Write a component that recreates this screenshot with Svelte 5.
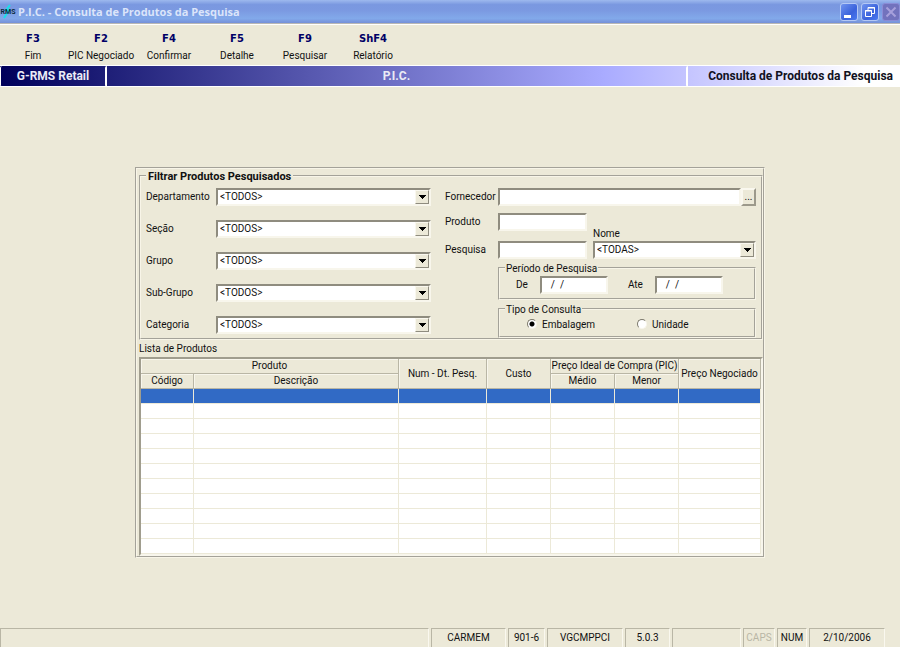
<script lang="ts">
  const shortcuts = [
    { key: 'F3', label: 'Fim' },
    { key: 'F2', label: 'PIC Negociado' },
    { key: 'F4', label: 'Confirmar' },
    { key: 'F5', label: 'Detalhe' },
    { key: 'F9', label: 'Pesquisar' },
    { key: 'ShF4', label: 'Relatório' }
  ];

  const filters = [
    { id: 'departamento', label: 'Departamento' },
    { id: 'secao', label: 'Seção' },
    { id: 'grupo', label: 'Grupo' },
    { id: 'subgrupo', label: 'Sub-Grupo' },
    { id: 'categoria', label: 'Categoria' }
  ];

  const columns = ['codigo', 'descricao', 'pesq', 'custo', 'medio', 'menor', 'negociado'];
  const rows = Array.from({ length: 11 }, (_, i) => i);

  const status = ['', 'CARMEM', '901-6', 'VGCMPPCI', '5.0.3', '', 'CAPS', 'NUM', '2/10/2006'];

  let selected = $state(0);
  let tipo = $state('embalagem');
  let de = $state('  /  /');
  let ate = $state('  /  /');
</script>

{#snippet arrow()}
  <span class="arrow">
    <svg width="7" height="4" viewBox="0 0 7 4" shape-rendering="crispEdges"><path d="M0 0h7v1h-1v1h-1v1h-1v1h-1v-1h-1v-1h-1v-1h-1z" /></svg>
  </span>
{/snippet}

<div class="window">
  <header class="titlebar">
    <svg class="logo" width="16" height="16" viewBox="0 0 16 16">
      <path d="M10 1 6 6h3L4 14" fill="none" stroke="#19e0e8" stroke-width="2" />
      <text x="8" y="10" text-anchor="middle">RMS</text>
    </svg>
    <h1>P.I.C. - Consulta de Produtos da Pesquisa</h1>
    <div class="controls">
      <button aria-label="Minimizar">
        <svg width="16" height="16" viewBox="0 0 16 16"><path d="M3 11h7v3H3z" fill="#fff" /></svg>
      </button>
      <button aria-label="Restaurar">
        <svg width="16" height="16" viewBox="0 0 16 16" fill="none" stroke="#fff">
          <path d="M6 6V3.5h6.500V9.500H10M6 4h7" />
          <path d="M3.500 6.500h6v6h-6zM3 7h7" />
        </svg>
      </button>
      <button class="close" aria-label="Fechar" disabled>
        <svg width="16" height="16" viewBox="0 0 16 16"><path d="m3.500 3.500 9 9M12.500 3.500l-9 9" stroke="#a7a0dc" stroke-width="2" /></svg>
      </button>
    </div>
  </header>

  <nav class="toolbar">
    {#each shortcuts as s}
      <button><b>{s.key}</b><span>{s.label}</span></button>
    {/each}
  </nav>

  <div class="band">
    <span class="brand">G-RMS Retail</span>
    <span class="module">P.I.C.</span>
    <span class="screen">Consulta de Produtos da Pesquisa</span>
  </div>

  <main>
    <section class="panel">
      <fieldset class="filters">
        <legend>Filtrar Produtos Pesquisados</legend>
        <div class="left">
          {#each filters as f}
            <label for={f.id}>{f.label}</label>
            <div class="combo">
              <select id={f.id}><option>&lt;TODOS&gt;</option></select>
              {@render arrow()}
            </div>
          {/each}
        </div>

        <div class="right">
          <div class="fields">
            <label for="fornecedor">Fornecedor</label>
            <div class="lookup">
              <input id="fornecedor" type="text" />
              <button aria-label="Buscar fornecedor">...</button>
            </div>
            <label for="produto">Produto</label>
            <input id="produto" type="text" />
            <div class="nome">
              <label for="nome">Nome</label>
              <div class="combo">
                <select id="nome"><option>&lt;TODAS&gt;</option></select>
                {@render arrow()}
              </div>
            </div>
            <label for="pesquisa">Pesquisa</label>
            <input id="pesquisa" type="text" />
          </div>

          <fieldset class="group periodo">
            <legend>Período de Pesquisa</legend>
            <label for="de">De</label>
            <input id="de" type="text" bind:value={de} />
            <label for="ate">Ate</label>
            <input id="ate" type="text" bind:value={ate} />
          </fieldset>

          <fieldset class="group tipo">
            <legend>Tipo de Consulta</legend>
            <label><input type="radio" name="tipo" value="embalagem" bind:group={tipo} />Embalagem</label>
            <label><input type="radio" name="tipo" value="unidade" bind:group={tipo} />Unidade</label>
          </fieldset>
        </div>
      </fieldset>

      <h2 id="lista">Lista de Produtos</h2>
      <div class="grid">
        <table aria-labelledby="lista">
          <colgroup>
            {#each columns as c}
              <col class={c} />
            {/each}
          </colgroup>
          <thead>
            <tr>
              <th colspan="2">Produto</th>
              <th rowspan="2">Num - Dt. Pesq.</th>
              <th rowspan="2">Custo</th>
              <th colspan="2">Preço Ideal de Compra (PIC)</th>
              <th rowspan="2">Preço Negociado</th>
            </tr>
            <tr>
              <th>Código</th>
              <th>Descrição</th>
              <th>Médio</th>
              <th>Menor</th>
            </tr>
          </thead>
          <tbody>
            {#each rows as r}
              <tr class:selected={r === selected} onclick={() => (selected = r)}>
                {#each columns as c}
                  <td></td>
                {/each}
              </tr>
            {/each}
          </tbody>
        </table>
      </div>
    </section>
  </main>

  <footer class="status">
    {#each status as s}
      <span class:off={s === 'CAPS'}>{s}</span>
    {/each}
  </footer>
</div>

<style>
  :global(body) {
    margin: 0;
    background: #ece9d8;
  }

  .window {
    display: flex;
    flex-direction: column;
    min-height: 100vh;
    background: #ece9d8;
    color: #111;
    font-family: Roboto, 'Liberation Sans', sans-serif;
    font-size: 10px;
    line-height: 13px;
  }

  * {
    box-sizing: border-box;
  }

  button,
  input,
  select {
    font: inherit;
    color: inherit;
    margin: 0;
    padding: 0;
    border-radius: 0;
  }

  .titlebar {
    display: flex;
    align-items: center;
    height: 24px;
    border-bottom: 1px solid #b9b8b4;
    background: linear-gradient(#9db9ee, #7a98e0 20%, #7b99e1 45%, #82a9ea 80%, #7590d8);
  }

  .logo {
    margin-right: 2px;
  }

  .logo text {
    fill: #0b2b3c;
    font-size: 7px;
    font-weight: 700;
  }

  h1 {
    flex: 1;
    margin: 0;
    color: #dbe5fa;
    font-family: 'Open Sans', sans-serif;
    font-size: 11px;
    font-weight: 700;
    line-height: 16px;
  }

  .controls {
    display: flex;
    gap: 3px;
  }

  .controls button {
    width: 18px;
    height: 18px;
    border: 1px solid #b4c8f5;
    border-radius: 3px;
    background: linear-gradient(135deg, #6f93ee, #3a62dc 60%, #4a7af0);
  }

  .controls svg {
    display: block;
  }

  .controls .close {
    border-color: #8b8cd6;
    background: #7272bd;
  }

  .toolbar {
    display: flex;
    gap: 2px;
    height: 41px;
    border-top: 1px solid #fff;
  }

  .toolbar button {
    display: flex;
    flex-direction: column;
    align-items: center;
    gap: 4px;
    width: 66px;
    padding-top: 7px;
    border: 0;
    background: none;
    white-space: nowrap;
  }

  .toolbar b {
    color: #000066;
    font-family: 'DejaVu Sans', sans-serif;
  }

  .band {
    display: grid;
    grid-template-columns: 105px 1fr 214px;
    height: 22px;
    border: solid #fff;
    border-width: 1px 0;
    background: linear-gradient(90deg, #00005a, #a9abff 67%, #c6c6ff 77%, #fff 96%);
    font-size: 12px;
    font-weight: 700;
    line-height: 21px;
    text-align: center;
  }

  .band span {
    border-left: 2px solid #fff;
    border-radius: 2px;
  }

  .brand,
  .module {
    color: #ebebf5;
  }

  .band .brand {
    border-left-width: 1px;
  }

  .band .screen {
    padding-right: 7px;
    text-align: right;
    color: #111122;
  }

  main {
    flex: 1;
    display: flex;
    align-items: center;
    justify-content: center;
    padding: 17px 0 8px;
  }

  .panel {
    width: 70%;
    min-width: 628px;
    padding: 1px 0 0 2px;
    border: 2px groove #f8f5e8;
  }

  fieldset {
    min-width: 0;
    margin: 0;
    border: 2px groove #f8f5e8;
  }

  .filters {
    display: grid;
    grid-template-columns: 285px 1fr;
    gap: 14px;
    padding: 5px 5px 0;
  }

  .filters > legend {
    padding: 0 2px;
    font-size: 11px;
    font-weight: 700;
  }

  .left {
    display: grid;
    grid-template-columns: 70px 1fr;
    grid-auto-rows: 18px;
    row-gap: 14px;
    align-items: center;
  }

  .fields {
    display: grid;
    grid-template-columns: 47px 89px 1fr;
    grid-template-rows: 18px 21px 18px;
    gap: 7px 6px;
  }

  .fields > label {
    line-height: 18px;
    white-space: nowrap;
  }

  input[type='text'],
  select {
    width: 100%;
    height: 18px;
    border: 2px solid;
    border-color: #8f8c7f #f8f6ec #f8f6ec #8f8c7f;
    background: #fff;
    outline: none;
  }

  select {
    display: block;
    appearance: none;
    padding: 0 18px 0 2px;
  }

  .combo {
    position: relative;
  }

  .arrow {
    position: absolute;
    top: 2px;
    right: 2px;
    bottom: 2px;
    display: grid;
    place-items: center;
    width: 14px;
    border: 1px solid;
    border-color: #faf8ef #8f8c7f #8f8c7f #faf8ef;
    background: #ece9d8;
    pointer-events: none;
  }

  .lookup {
    grid-column: 2 / 4;
    display: flex;
  }

  .lookup button {
    flex: none;
    width: 15px;
    height: 18px;
    border: 2px solid;
    border-color: #faf8ef #9c998b #9c998b #faf8ef;
    background: #ece9d8;
    line-height: 12px;
  }

  .nome {
    grid-area: 2 / 3 / 4 / 4;
    align-self: end;
  }

  .nome label {
    display: block;
    margin-bottom: 1px;
  }

  .group {
    display: flex;
    align-items: center;
    margin: 3px 0 0 53px;
    padding: 1px 5px 4px;
  }

  .group legend {
    padding: 0 1px;
  }

  .group legend + label {
    margin-left: 11px;
  }

  .periodo input[type='text'] {
    width: 68px;
    margin: 0 20px 0 12px;
    padding-left: 4px;
    white-space: pre;
  }

  .tipo {
    gap: 42px;
  }

  .tipo legend + label {
    margin-left: 22px;
  }

  .tipo label {
    display: flex;
    align-items: center;
    gap: 5px;
    line-height: 15px;
  }

  input[type='radio'] {
    appearance: none;
    width: 10px;
    height: 10px;
    border: 1px solid;
    border-color: #7b786b #f8f6ec #f8f6ec #7b786b;
    border-radius: 50%;
    background: #fff;
  }

  input[type='radio']:checked {
    background: radial-gradient(circle, #000 2px, #fff 3px);
  }

  h2 {
    margin: 2px 0;
    font-size: 10px;
    font-weight: 400;
  }

  .grid {
    border: 2px solid;
    border-color: #a09d8e #f8f6ec #f8f6ec #a09d8e;
    background: #fff;
  }

  table {
    width: 100%;
    table-layout: fixed;
    border-collapse: separate;
    border-spacing: 0;
  }

  .codigo {
    width: 53px;
  }

  .pesq {
    width: 88px;
  }

  .custo,
  .medio,
  .menor {
    width: 64px;
  }

  .negociado {
    width: 82px;
  }

  th,
  td {
    height: 15px;
    padding: 0;
    border: solid #ece9d8;
    border-width: 0 1px 1px 0;
  }

  th {
    border-color: #b9b6a5;
    background: #ece9d8;
    box-shadow: inset 1px 1px #f8f6ec;
    font-weight: 400;
    white-space: nowrap;
  }

  .selected td {
    background: #316ac5;
  }

  .status {
    display: grid;
    grid-template-columns: 1fr 75px 37px 76px 45px 69px 32px 30px 76px;
    gap: 2px;
    height: 19px;
    padding-right: 15px;
    line-height: 18px;
    text-align: center;
  }

  .status span {
    border: solid;
    border-width: 1px 1px 0;
    border-color: #b9b6a5 #faf8ef #b9b6a5 #b9b6a5;
  }

  .status .off {
    color: #b9b6a5;
  }
</style>
